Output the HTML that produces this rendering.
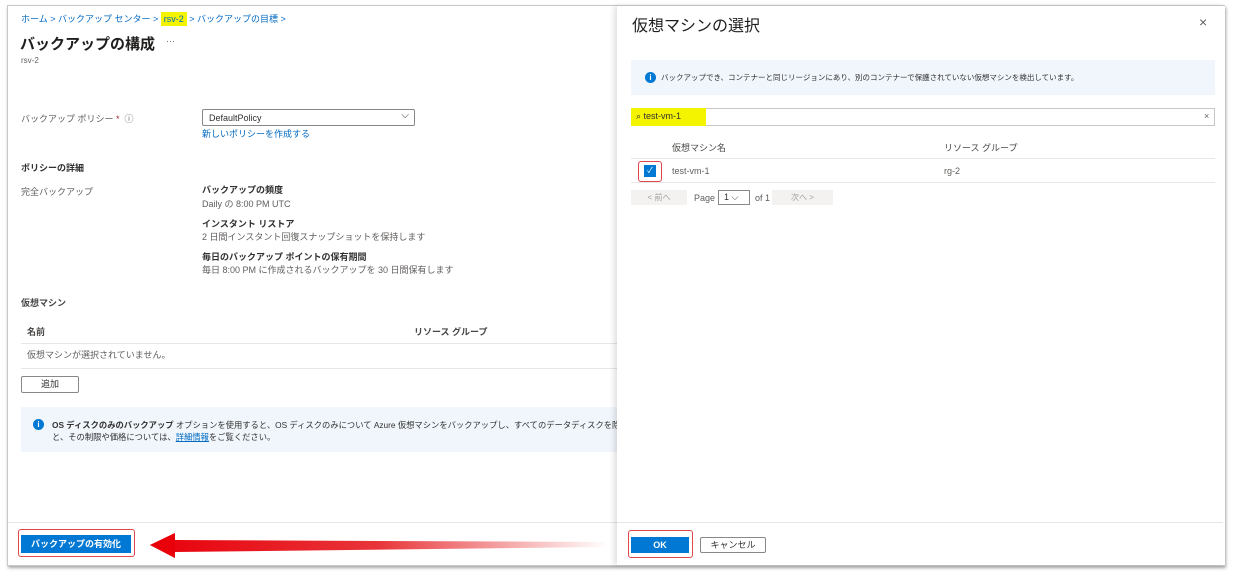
<!DOCTYPE html>
<html><head><meta charset="utf-8">
<style>
*{margin:0;padding:0;box-sizing:border-box}
body{width:1233px;height:576px;background:#fff;position:relative;overflow:hidden;font-family:"Liberation Sans","Noto Sans CJK JP",sans-serif;color:#323130;font-size:9px}
.a{position:absolute;white-space:nowrap}
.frame{position:absolute;left:7px;top:5px;width:1218px;height:561px;border:1px solid #c8c8c8;box-shadow:1px 2px 3px rgba(0,0,0,.35);background:#fff}
.blue{color:#0069c2}
.g{color:#605e5c}
.b{font-weight:bold}
.line{position:absolute;height:1px;background:#e6e6e6}
.btnb{position:absolute;background:#0078d4;color:#fff;font-weight:bold;text-align:center}
.red{position:absolute;border:1.5px solid #e0474c;border-radius:3px}
</style></head><body>
<div class="frame"></div>

<!-- left panel -->
<div class="a blue" style="left:21px;top:13px;font-size:9px;line-height:12px">ホーム &gt; バックアップ センター &gt; <span style="background:#f4f400;padding:2px 3px">rsv-2</span> &gt; バックアップの目標 &gt;</div>
<div class="a b" style="left:20px;top:33px;font-size:15px;color:#201f1e">バックアップの構成</div>
<div class="a g" style="left:166px;top:36px;font-size:9px">···</div>
<div class="a g" style="left:21px;top:56px;font-size:8px">rsv-2</div>

<div class="a g" style="left:21px;top:112px">バックアップ ポリシー <span style="color:#a4262c">*</span> &nbsp;ⓘ</div>
<div class="a" style="left:202px;top:109px;width:213px;height:17px;border:1px solid #8a8886;border-radius:2px;padding:3px 6px;font-size:9px">DefaultPolicy<span style="position:absolute;right:5px;top:0px;font-size:10px">⌵</span></div>
<div class="a blue" style="left:202px;top:127px">新しいポリシーを作成する</div>

<div class="a b" style="left:21px;top:161px">ポリシーの詳細</div>
<div class="a g" style="left:21px;top:185px">完全バックアップ</div>
<div class="a b" style="left:202px;top:183px">バックアップの頻度</div>
<div class="a g" style="left:202px;top:197px">Daily の 8:00 PM UTC</div>
<div class="a b" style="left:202px;top:217px">インスタント リストア</div>
<div class="a g" style="left:202px;top:230px">2 日間インスタント回復スナップショットを保持します</div>
<div class="a b" style="left:202px;top:250px">毎日のバックアップ ポイントの保有期間</div>
<div class="a g" style="left:202px;top:263px">毎日 8:00 PM に作成されるバックアップを 30 日間保有します</div>

<div class="a b" style="left:21px;top:296px;color:#484644">仮想マシン</div>
<div class="a b" style="left:27px;top:325px;color:#484644">名前</div>
<div class="a b" style="left:414px;top:325px;color:#484644">リソース グループ</div>
<div class="line" style="left:21px;top:343px;width:596px"></div>
<div class="a g" style="left:27px;top:348px">仮想マシンが選択されていません。</div>
<div class="line" style="left:21px;top:368px;width:596px"></div>
<div class="a" style="left:21px;top:376px;width:58px;height:17px;border:1px solid #8a8886;border-radius:2px;text-align:center;line-height:15px">追加</div>

<div class="a" style="left:21px;top:407px;width:596px;height:45px;background:#f0f6fc"></div>
<div class="a" style="left:33px;top:419px;width:11px;height:11px;border-radius:50%;background:#0078d4;color:#fff;font-size:8px;font-weight:bold;text-align:center;line-height:11px">i</div>
<div class="a" style="left:52px;top:419px;font-size:8.3px;color:#323130;width:565px;overflow:hidden"><b>OS ディスクのみのバックアップ</b> オプションを使用すると、OS ディスクのみについて Azure 仮想マシンをバックアップし、すべてのデータディスクを除外することができます。Powe</div>
<div class="a" style="left:52px;top:431px;font-size:8.3px">と、その制限や価格については、<span class="blue" style="text-decoration:underline">詳細情報</span>をご覧ください。</div>

<div class="line" style="left:8px;top:522px;width:609px"></div>
<div class="red" style="left:18px;top:529px;width:117px;height:28px"></div>
<div class="btnb" style="left:21px;top:535px;width:110px;height:18px;line-height:18px;font-size:9px">バックアップの有効化</div>

<svg class="a" style="left:148px;top:530px" width="470" height="32">
<defs><linearGradient id="gr" x1="0" x2="1"><stop offset="0" stop-color="#e8000a"/><stop offset="0.5" stop-color="#e8353a"/><stop offset="1" stop-color="#e83a3a" stop-opacity="0"/></linearGradient></defs>
<polygon points="2,15 27,3 27,10 460,12 460,17 27,22 27,28" fill="url(#gr)"/>
<polygon points="2,15 27,3 27,28" fill="#e8000a"/>
</svg>

<!-- right panel -->
<div class="a" style="left:617px;top:6px;width:608px;height:559px;background:#fff;box-shadow:-3px 0 5px rgba(0,0,0,.12)"></div>
<div class="a" style="left:632px;top:12px;font-size:16px;color:#201f1e">仮想マシンの選択</div>
<div class="a g" style="left:1199px;top:14px;font-size:14px">×</div>
<div class="a" style="left:631px;top:60px;width:584px;height:35px;background:#f0f6fc"></div>
<div class="a" style="left:645px;top:72px;width:11px;height:11px;border-radius:50%;background:#0078d4;color:#fff;font-size:8px;font-weight:bold;text-align:center;line-height:11px">i</div>
<div class="a" style="left:661px;top:72px;font-size:7.5px">バックアップでき、コンテナーと同じリージョンにあり、別のコンテナーで保護されていない仮想マシンを検出しています。</div>
<div class="a" style="left:631px;top:108px;width:584px;height:18px;border:1px solid #c8c6c4"></div>
<div class="a" style="left:631px;top:108px;width:75px;height:18px;background:#f4f400"></div>
<div class="a" style="left:636px;top:111px;font-size:9px">⌕ test-vm-1</div>
<div class="a g" style="left:1204px;top:111px;font-size:9px">×</div>
<div class="a" style="left:672px;top:141px;color:#484644">仮想マシン名</div>
<div class="a" style="left:944px;top:141px;color:#484644">リソース グループ</div>
<div class="line" style="left:631px;top:158px;width:584px"></div>
<div class="red" style="left:638px;top:161px;width:24px;height:21px"></div>
<div class="a" style="left:644px;top:165px;width:12px;height:12px;background:#0078d4;color:#fff;font-size:8px;text-align:center;line-height:12px">✓</div>
<div class="a g" style="left:672px;top:166px">test-vm-1</div>
<div class="a g" style="left:944px;top:166px">rg-2</div>
<div class="line" style="left:631px;top:182px;width:584px"></div>
<div class="a" style="left:631px;top:190px;width:56px;height:15px;background:#f3f2f1;color:#a19f9d;text-align:center;line-height:15px;font-size:8px">&lt; 前へ</div>
<div class="a g" style="left:694px;top:193px">Page</div>
<div class="a" style="left:718px;top:190px;width:32px;height:15px;border:1px solid #8a8886;padding-left:5px;line-height:13px">1 ⌵</div>
<div class="a g" style="left:755px;top:193px">of 1</div>
<div class="a" style="left:772px;top:190px;width:61px;height:15px;background:#f3f2f1;color:#a19f9d;text-align:center;line-height:15px;font-size:8px">次へ &gt;</div>

<div class="line" style="left:617px;top:522px;width:606px"></div>
<div class="red" style="left:628px;top:530px;width:65px;height:28px"></div>
<div class="btnb" style="left:631px;top:537px;width:58px;height:16px;line-height:16px">OK</div>
<div class="a" style="left:700px;top:537px;width:66px;height:16px;border:1px solid #8a8886;border-radius:2px;text-align:center;line-height:14px">キャンセル</div>
</body></html>
